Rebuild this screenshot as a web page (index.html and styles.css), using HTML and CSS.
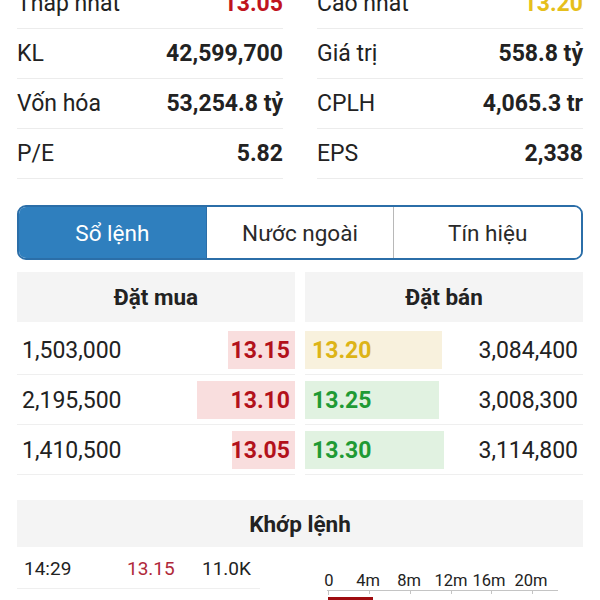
FILE: index.html
```html
<!DOCTYPE html>
<html lang="vi">
<head>
    <meta charset="UTF-8">
    <meta name="viewport" content="width=device-width, initial-scale=1.0">
    <title>Chi tiết cổ phiếu</title>
    <link rel="stylesheet" href="styles.css">
</head>
<body>
    <div class="page">
        <!-- Thong tin co ban -->
        <div class="stats">
            <div class="stat-col">
                <div class="stat-row"><span>Thấp nhất</span><b class="down">13.05</b></div>
                <div class="stat-row"><span>KL</span><b>42,599,700</b></div>
                <div class="stat-row"><span>Vốn hóa</span><b>53,254.8 tỷ</b></div>
                <div class="stat-row"><span>P/E</span><b>5.82</b></div>
            </div>
            <div class="stat-col">
                <div class="stat-row"><span>Cao nhất</span><b class="ref">13.20</b></div>
                <div class="stat-row"><span>Giá trị</span><b>558.8 tỷ</b></div>
                <div class="stat-row"><span>CPLH</span><b>4,065.3 tr</b></div>
                <div class="stat-row"><span>EPS</span><b>2,338</b></div>
            </div>
        </div>

        <div class="tabs">
            <div class="tab active">Sổ lệnh</div>
            <div class="tab">Nước ngoài</div>
            <div class="tab">Tín hiệu</div>
        </div>

        <!-- So lenh -->
        <div class="book">
            <div class="book-col">
                <div class="book-head">Đặt mua</div>
                <div class="book-row buy">
                    <span class="vol">1,503,000</span>
                    <span class="price down-bg" style="width: 67px;">13.15</span>
                </div>
                <div class="book-row buy">
                    <span class="vol">2,195,500</span>
                    <span class="price down-bg" style="width: 98px;">13.10</span>
                </div>
                <div class="book-row buy">
                    <span class="vol">1,410,500</span>
                    <span class="price down-bg" style="width: 63px;">13.05</span>
                </div>
            </div>
            <div class="book-col">
                <div class="book-head">Đặt bán</div>
                <div class="book-row sell">
                    <span class="price ref-bg" style="width: 137px;">13.20</span>
                    <span class="vol">3,084,400</span>
                </div>
                <div class="book-row sell">
                    <span class="price up-bg" style="width: 134px;">13.25</span>
                    <span class="vol">3,008,300</span>
                </div>
                <div class="book-row sell">
                    <span class="price up-bg" style="width: 139px;">13.30</span>
                    <span class="vol">3,114,800</span>
                </div>
            </div>
        </div>

        <!-- Khop lenh -->
        <div class="match-head">Khớp lệnh</div>
        <div class="match">
            <div class="match-list">
                <div class="match-row">
                    <span class="m-time">14:29</span>
                    <span class="m-price">13.15</span>
                    <span class="m-vol">11.0K</span>
                </div>
            </div>
            <svg class="chart" width="260" height="53" viewBox="0 0 260 53">
                <g font-family="Roboto, sans-serif" font-size="16.5" fill="#222" text-anchor="middle">
                    <text x="11" y="39">0</text>
                    <text x="50" y="39">4m</text>
                    <text x="91" y="39">8m</text>
                    <text x="133" y="39">12m</text>
                    <text x="171" y="39">16m</text>
                    <text x="213" y="39">20m</text>
                </g>
                <line x1="9" y1="43.5" x2="240" y2="43.5" stroke="#c4c4c4" stroke-width="1"/>
                <g stroke="#c4c4c4" stroke-width="1">
                    <line x1="10.5" y1="43" x2="10.5" y2="48"/>
                    <line x1="51.5" y1="43" x2="51.5" y2="47"/>
                    <line x1="92.5" y1="43" x2="92.5" y2="47"/>
                    <line x1="133.5" y1="43" x2="133.5" y2="47"/>
                    <line x1="173.5" y1="43" x2="173.5" y2="47"/>
                    <line x1="214.5" y1="43" x2="214.5" y2="47"/>
                </g>
                <rect x="10" y="50" width="45" height="10" fill="#9e0b0f"/>
            </svg>
        </div>
    </div>
</body>
</html>
```

FILE: styles.css
```css
body {
    margin: 0;
    background: #fff;
    font-family: Roboto, "Noto Sans", sans-serif;
    color: #222;
}
.page {
    padding: 0 17px;
    margin-top: -21px;
}
.stats {
    display: grid;
    grid-template-columns: 1fr 1fr;
    column-gap: 34px;
}
.stat-row {
    display: flex;
    justify-content: space-between;
    align-items: center;
    height: 49px;
    border-bottom: 1px solid #ececec;
    font-size: 23px;
}
.stat-row b {
    font-weight: 700;
}
.down {
    color: #c0141e;
}
.ref {
    color: #e6bf1c;
}
.tabs {
    display: flex;
    margin-top: 26px;
    height: 51px;
    border: 2px solid #2b6ea8;
    border-radius: 9px;
    overflow: hidden;
}
.tab {
    flex: 1;
    display: flex;
    align-items: center;
    justify-content: center;
    font-size: 22.5px;
    color: #2a2a2a;
    background: #fff;
}
.tab + .tab {
    border-left: 1px solid #b8b8b8;
}
.tab.active {
    background: #2f7fbe;
    color: #fff;
}
.tab.active + .tab {
    border-left: 1px solid #2b6ea8;
}
.book {
    display: grid;
    grid-template-columns: 1fr 1fr;
    column-gap: 10px;
    margin-top: 12px;
}
.book-head {
    height: 50px;
    display: flex;
    align-items: center;
    justify-content: center;
    background: #f4f4f4;
    font-size: 22.5px;
    font-weight: 700;
    margin-bottom: 3px;
}
.book-row {
    display: flex;
    justify-content: space-between;
    align-items: center;
    height: 49px;
    border-bottom: 1px solid #efefef;
    font-size: 23px;
}
.book-row .vol {
    padding: 2px 5px 0;
}
.price {
    height: 38px;
    display: flex;
    align-items: center;
    padding-top: 2px;
    font-weight: 700;
    box-sizing: border-box;
}
.buy .price {
    justify-content: flex-end;
    padding-right: 5px;
}
.sell .price {
    padding-left: 7px;
}
.down-bg {
    background: #f9dede;
    color: #b3111b;
}
.ref-bg {
    background: #f8f1dd;
    color: #ddb417;
}
.up-bg {
    background: #e1f2e1;
    color: #1f9a34;
}
.match-head {
    margin-top: 25px;
    height: 47px;
    display: flex;
    align-items: center;
    justify-content: center;
    background: #f4f4f4;
    font-size: 22.5px;
    font-weight: 700;
}
.match {
    display: flex;
    justify-content: space-between;
}
.match-list {
    width: 243px;
}
.match-row {
    display: flex;
    align-items: center;
    height: 40px;
    padding-top: 1px;
    border-bottom: 1px solid #efefef;
    font-size: 19px;
}
.m-time {
    width: 103px;
    padding-left: 7px;
}
.m-price {
    width: 75px;
    color: #b0283a;
}
.chart {
    display: block;
    margin-right: 5px;
}
```
